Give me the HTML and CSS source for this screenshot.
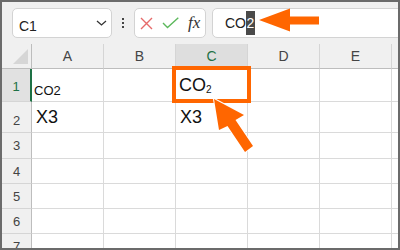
FILE: index.html
```html
<!DOCTYPE html>
<html>
<head>
<meta charset="utf-8">
<link rel="stylesheet" href="styles.css">
</head>
<body>
<div class="frame">
  <div class="toolbar">
    <div class="namebox">
      <span class="ref">C1</span>
      <svg class="chev" width="11" height="6" viewBox="0 0 11 6"><path d="M1 1L5.5 5L10 1" fill="none" stroke="#333" stroke-width="1.3"/></svg>
    </div>
    <div class="dots"><i></i><i></i><i></i></div>
    <div class="fbtns">
      <svg width="13" height="13" viewBox="0 0 13 13"><path d="M1 1L12 12M12 1L1 12" stroke="#e66a6a" stroke-width="1.4" fill="none"/></svg>
      <svg class="chk" width="17" height="12" viewBox="0 0 17 12"><path d="M1 6L5.5 10.5L16.3 0.8" stroke="#5cb85c" stroke-width="1.4" fill="none"/></svg>
      <span class="fx">fx</span>
    </div>
    <div class="finput"><span class="ftxt">CO<span class="sel">2</span></span></div>
  </div>
  <div class="sheet">
    <div class="corner"><div class="tri"></div></div>
    <div class="ch">A</div>
    <div class="ch">B</div>
    <div class="ch ch-on">C</div>
    <div class="ch">D</div>
    <div class="ch">E</div>
    <div class="ch"></div>

    <div class="rh rh-on r1">1</div>
    <div class="cell"><span class="t13">CO2</span></div>
    <div class="cell"></div>
    <div class="cell"><span class="t18 pb6">CO<sub>2</sub></span></div>
    <div class="cell"></div>
    <div class="cell"></div>
    <div class="cell"></div>

    <div class="rh r2">2</div>
    <div class="cell"><span class="t18 pb5">X3</span></div>
    <div class="cell"></div>
    <div class="cell"><span class="t18 pb5">X3</span></div>
    <div class="cell"></div>
    <div class="cell"></div>
    <div class="cell"></div>

    <div class="rh">3</div>
    <div class="cell"></div><div class="cell"></div><div class="cell"></div><div class="cell"></div><div class="cell"></div><div class="cell"></div>
    <div class="rh">4</div>
    <div class="cell"></div><div class="cell"></div><div class="cell"></div><div class="cell"></div><div class="cell"></div><div class="cell"></div>
    <div class="rh">5</div>
    <div class="cell"></div><div class="cell"></div><div class="cell"></div><div class="cell"></div><div class="cell"></div><div class="cell"></div>
    <div class="rh">6</div>
    <div class="cell"></div><div class="cell"></div><div class="cell"></div><div class="cell"></div><div class="cell"></div><div class="cell"></div>
    <div class="rh">7</div>
    <div class="cell"></div><div class="cell"></div><div class="cell"></div><div class="cell"></div><div class="cell"></div><div class="cell"></div>
  </div>
  <svg class="overlay" width="400" height="250" viewBox="0 0 400 250">
    <polygon points="259,20 290,8.5 290,16.5 319,16.5 319,24.5 290,24.5 290,31.5" fill="#ff6600"/>
    <rect x="174" y="68" width="75" height="33" fill="none" stroke="#ff6600" stroke-width="4"/>
    <polygon points="214,99 244,115 235.5,120 253,146 245,152 227.5,126 219,130" fill="#ff6600" stroke="#fff" stroke-width="2" stroke-linejoin="round" paint-order="stroke"/>
  </svg>
</div>
</body>
</html>
```

FILE: styles.css
```css
html, body {
  margin: 0;
  padding: 0;
  background: #fff;
}

.frame {
  position: relative;
  width: 400px;
  height: 250px;
  box-sizing: border-box;
  border: 2px solid #6b6b6b;
  background: #f0f0f0;
  overflow: hidden;
  font-family: "Liberation Sans", Arial, sans-serif;
  color: #222;
}

.toolbar {
  display: flex;
  align-items: flex-start;
  height: 36px;
  box-sizing: border-box;
  padding: 6px 0 0 10px;
}

.namebox {
  width: 100px;
  height: 30px;
  box-sizing: border-box;
  border: 1px solid #d3d3d3;
  border-radius: 5px;
  background: #fff;
  display: flex;
  align-items: center;
  justify-content: space-between;
  padding: 0 4px 0 6px;
}

.ref {
  font-size: 14px;
  padding-top: 5px;
  color: #222;
}

.chev {
  display: block;
}

.dots {
  width: 22px;
  height: 30px;
  display: flex;
  flex-direction: column;
  align-items: center;
  justify-content: center;
  gap: 2px;
}

.dots i {
  display: block;
  width: 2px;
  height: 2px;
  background: #444;
}

.fbtns {
  width: 72px;
  height: 30px;
  box-sizing: border-box;
  border: 1px solid #d3d3d3;
  border-radius: 5px;
  background: #fff;
  display: flex;
  align-items: center;
  padding-left: 5px;
}

.fbtns svg {
  display: block;
}

.chk {
  margin-left: 9px;
}

.fx {
  margin-left: 9px;
  font-family: "Liberation Serif", "DejaVu Serif", serif;
  font-style: italic;
  font-size: 17px;
  color: #333;
}

.finput {
  flex: 1;
  height: 30px;
  box-sizing: border-box;
  margin-left: 6px;
  margin-right: -8px;
  border: 1px solid #d3d3d3;
  border-radius: 5px;
  background: #fff;
  display: flex;
  align-items: center;
  padding-left: 12px;
  font-size: 14px;
}

.sel {
  display: inline-block;
  line-height: 24px;
  background: #4a4a4a;
  color: #fff;
  padding: 0 1px 0 0.5px;
}

.sheet {
  margin-top: 6px;
  display: grid;
  grid-template-columns: 30px repeat(6, 72px);
  grid-template-rows: 25px 33px 31px 26px 25px 25px 25px 25px;
}

.sheet > div {
  box-sizing: border-box;
  min-width: 0;
}

.corner {
  border-right: 1px solid #bdbdbd;
  border-bottom: 1px solid #bdbdbd;
  display: flex;
  justify-content: flex-end;
  align-items: flex-end;
  padding: 0 3px 4px 0;
}

.tri {
  width: 15px;
  height: 15px;
  background: #d6d6d6;
  clip-path: polygon(100% 0, 100% 100%, 0 100%);
}

.ch {
  display: flex;
  align-items: center;
  justify-content: center;
  font-size: 14px;
  color: #444;
  border-right: 1px solid #d5d5d5;
  border-bottom: 1px solid #bdbdbd;
}

.ch-on {
  background: #dedede;
  color: #1e7145;
}

.rh {
  display: flex;
  align-items: center;
  justify-content: center;
  font-size: 13px;
  color: #444;
  border-right: 1px solid #bdbdbd;
  border-bottom: 1px solid #d5d5d5;
}

.rh-on {
  background: #e1e1e1;
  color: #1e7145;
  border-right: 2px solid #1e7145;
}

.r1 {
  padding-top: 3px;
}

.r2 {
  padding-top: 6px;
}

.cell {
  background: #fff;
  border-right: 1px solid #dadada;
  border-bottom: 1px solid #dadada;
  display: flex;
  align-items: flex-end;
}

.t13 {
  font-size: 13px;
  line-height: 15px;
  padding: 0 0 3px 2px;
  color: #111;
}

.t18 {
  font-size: 18px;
  line-height: 20px;
  padding-left: 3px;
  color: #111;
}

.t18 sub {
  font-size: 10px;
  line-height: 0;
  vertical-align: -2px;
}

.pb6 {
  padding-bottom: 6px;
}

.pb5 {
  padding-bottom: 5px;
  padding-left: 4px;
}

.overlay {
  position: absolute;
  left: -2px;
  top: -2px;
  pointer-events: none;
}
```
